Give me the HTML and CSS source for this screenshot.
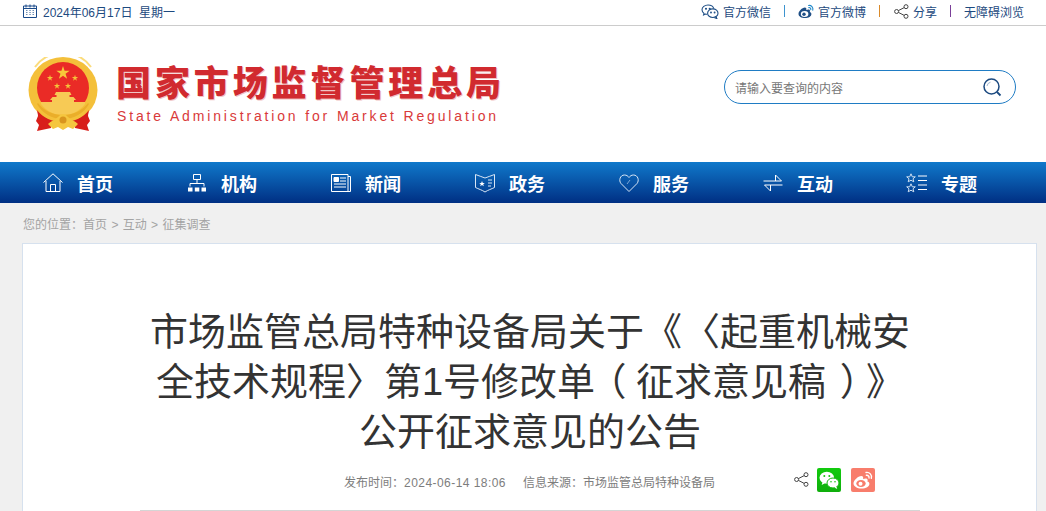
FILE: index.html
```html
<!DOCTYPE html>
<html lang="zh-CN">
	<head>
		<meta charset="utf-8">
		<title>市场监管总局特种设备局关于《〈起重机械安全技术规程〉第1号修改单（征求意见稿）》公开征求意见的公告</title>
		<link rel="stylesheet" href="styles.css">
	</head>
	<body>
		<!-- top bar -->
		<div class="topbar">
			<div class="date">
				<svg class="icon-cal" viewBox="0 0 14 14" width="14" height="14"><path d="M.5 2h13v11.500H.5zM.5 4.500h13" fill="none" stroke="#1a4a8a"/><path d="M3 .5v3M7 .5v3M11 .5v3" stroke="#1a4a8a"/><path d="M3 6.500h1.500M6.300 6.500h1.500M9.500 6.500h1.500M3 8.500h1.500M6.300 8.500h1.500M9.500 8.500h1.500M3 10.500h1.500M6.300 10.500h1.500M9.500 10.500h1.500" stroke="#5f82ad" stroke-width=".9"/></svg>
				<span>2024年06月17日&nbsp; 星期一</span>
			</div>
			<div class="toplinks">
				<a class="toplink" href="#">
					<svg viewBox="0 0 18 15" width="18" height="15" fill="none" stroke="#1f4f86" stroke-width="1.100"><path d="M7 1c-3.300 0-6 2.100-6 4.800 0 1.500.8 2.700 2 3.600l-.4 1.500 1.800-.9c.6.200 1.100.3 1.800.3"/><path d="M7 1c2.800 0 5.200 1.500 5.800 3.700"/><ellipse cx="11.800" cy="9.200" rx="5.200" ry="4.300"/><path d="M15 13l.8 1.500-2.300-.8"/><circle cx="5" cy="4.700" r=".5" fill="#1f4f86"/><circle cx="8.700" cy="4.700" r=".5" fill="#1f4f86"/><circle cx="10" cy="8.500" r=".4" fill="#1f4f86"/><circle cx="13.600" cy="8.500" r=".4" fill="#1f4f86"/></svg>
					<span>官方微信</span>
				</a>
				<i class="sep sep-blue"></i>
				<a class="toplink toplink-wb" href="#">
					<svg viewBox="0 0 17 15" width="17" height="15"><path d="M7 14C3.500 14 .5 12.300.5 9.900.5 7.400 4.300 3.600 6.800 3.600c1.600 0 1.800 1.300 1.400 2.500 2-.8 3.800-.7 3.800.9 0 .4-.1.700-.3 1 1 .3 1.700.9 1.700 1.900C13.400 12.300 10.600 14 7 14z" fill="#1f4f86"/><ellipse cx="6.600" cy="10" rx="3.800" ry="2.900" fill="#fff"/><circle cx="6" cy="10.200" r="1.700" fill="#1f4f86"/><path d="M10.500 1.500c2.800-.5 5 1.900 4.300 4.700M10.800 3.600c1.300-.2 2.300.9 2 2.100" fill="none" stroke="#1f88c9" stroke-width="1.100" stroke-linecap="round"/></svg>
					<span>官方微博</span>
				</a>
				<i class="sep sep-orange"></i>
				<a class="toplink" href="#">
					<svg viewBox="0 0 15 15" width="15" height="15" fill="none" stroke="#444" stroke-width="1"><circle cx="2.600" cy="7.500" r="2"/><circle cx="12" cy="2.700" r="2"/><circle cx="12" cy="12.300" r="2"/><path d="M4.400 6.600l5.800-3M4.400 8.400l5.800 3"/></svg>
					<span>分享</span>
				</a>
				<i class="sep sep-purple"></i>
				<a class="toplink" href="#"><span>无障碍浏览</span></a>
			</div>
		</div>

		<!-- logo and search -->
		<div class="header">
			<div class="logo">
				<svg class="emblem" viewBox="0 0 70 74" width="70" height="74">
					<defs>
						<polygon id="star" points="0,-1 .225,-.309 .951,-.309 .363,.118 .588,.809 0,.382 -.588,.809 -.363,.118 -.951,-.309 -.225,-.309"/>
					</defs>
					<!-- red ribbons sit behind the ring -->
					<path d="M9 50l14 12v9L9 74l2-6-3-4 2-5z" fill="#d81e1a"/>
					<path d="M61 50L47 62v9l14 3-2-6 3-4-2-5z" fill="#d81e1a"/>
					<ellipse cx="35" cy="33" rx="34.500" ry="33" fill="#f4c03a"/>
					<path d="M7 10a34 33 0 0 1 56 0" fill="none" stroke="#fbdc7c" stroke-width="2"/>
					<path d="M9 53c6 8 15 12 26 12s20-4 26-12l-2 8c-6 6-15 9-24 9s-18-3-24-9z" fill="#d81e1a"/>
					<circle cx="35" cy="31" r="26" fill="#ea2b26"/>
					<use href="#star" transform="translate(35 16) scale(7)" fill="#f7c83a"/>
					<use href="#star" transform="translate(22 21) scale(3.300)" fill="#f5c23a"/>
					<use href="#star" transform="translate(47 21) scale(3.300)" fill="#f5c23a"/>
					<use href="#star" transform="translate(29 29) scale(3.300)" fill="#f5c23a"/>
					<use href="#star" transform="translate(40 29) scale(3.300)" fill="#f5c23a"/>
					<path d="M28 35h14l1.500 3h-2v2h4l2.500 3h-2v4H24v-4h-2l2.500-3h4v-2h-2z" fill="#f7ca55"/>
					<path d="M13 47c6 8 14 11 22 11s16-3 22-11v-2H13z" fill="#f7ca55"/>
					<path d="M9 47c5 9 15 15 26 15s21-6 26-15l-1-1c-6 8-15 12-25 12s-19-4-25-12z" fill="#eaae2a"/>
					<path d="M20 67c3-3 7-4 10-7 2-2 3-3 5-3s3 1 5 3c3 3 7 4 10 7l-5 5-5-2-5 3-5-3-5 2z" fill="#f5c63f"/>
					<circle cx="35" cy="63" r="3.500" fill="#d9951e"/>
				</svg>
				<div class="logotext">
					<div class="cn">国家市场监督管理总局</div>
					<div class="en">State Administration for Market Regulation</div>
				</div>
			</div>
			<div class="search">
				<span>请输入要查询的内容</span>
				<svg viewBox="0 0 20 20" width="20" height="20" fill="none"><circle cx="9.500" cy="9.500" r="7.500" stroke="#1c4a80" stroke-width="1.500"/><path d="M15 15l3.500 3.500" stroke="#1c4a80" stroke-width="1.800"/><path d="M5 9a4.500 4.500 0 0 1 3.500-3.800" stroke="#9fb6d0" stroke-width="1"/></svg>
			</div>
		</div>

		<!-- main nav -->
		<div class="nav">
			<a href="#">
				<svg viewBox="0 0 20 20" width="20" height="20" fill="none" stroke="#fff"><path d="M.5 9.500L10 .8l9.500 8.700M3 8v10.500h14V8M7.500 18.500v-7h5v7"/></svg>
				<span>首页</span>
			</a>
			<a href="#">
				<svg viewBox="0 0 20 20" width="20" height="20" fill="none" stroke="#fff"><path d="M6.500 1.500h7v5h-7zM10 6.500v4M3 13.500v-3h14v3"/><path d="M1 14.500h4.500v4H1zM7.800 14.500h4.500v4H7.800zM14.500 14.500H19v4h-4.500z" fill="#fff" stroke="none"/></svg>
				<span>机构</span>
			</a>
			<a href="#">
				<svg viewBox="0 0 20 20" width="20" height="20" fill="none" stroke="#fff"><path d="M.5 1.500h16.500v17H.5zM17 3.500h2.500v15H17"/><path d="M3 4.500h4.500v4H3z" fill="#fff"/><path d="M9 5h6M9 8h6M3 11h12M3 14h12"/></svg>
				<span>新闻</span>
			</a>
			<a href="#">
				<svg viewBox="0 0 20 20" width="20" height="20" fill="none" stroke="#d9e6f5"><path d="M.5 1.500c3 1.500 6.500 2 9.500 3.500 3-1.500 6.500-2 9.500-3.500v13c-3 1.500-6.500 2.500-9.500 4.500-3-2-6.500-3-9.500-4.500z"/><path d="M13 7h4M13 10h4M13 13h3"/><path d="M7 8l.8 2h2l-1.600 1.300.6 2L7 12.100l-1.800 1.200.6-2L4.200 10h2z" fill="#fff" stroke="none"/></svg>
				<span>政务</span>
			</a>
			<a href="#">
				<svg viewBox="0 0 20 20" width="20" height="20" fill="none" stroke="#d9e6f5"><path d="M10 18.500L2 10.500C-.5 7.500 1 2 5.500 2 7.500 2 9 3 10 4.500 11 3 12.500 2 14.500 2 19 2 20.500 7.500 18 10.500z"/><path d="M8 11l3-4" stroke="#7fa8d6"/></svg>
				<span>服务</span>
			</a>
			<a href="#">
				<svg viewBox="0 0 20 20" width="20" height="20" fill="none" stroke="#fff"><path d="M.5 8h18L12.500 2v6M19.500 12H1.500l6 6v-6"/></svg>
				<span>互动</span>
			</a>
			<a class="nav-last" href="#">
				<svg viewBox="0 0 22 20" width="22" height="20" fill="none" stroke="#cfe0f2"><path d="M5 .8l1.300 3h3L7 5.800l.8 3L5 7.200 2.200 8.800l.8-3L.7 3.800h3zM5 10.800l1.300 3h3L7 15.800l.8 3L5 17.200l-2.800 1.600.8-3-2.300-2h3z"/><path d="M12 3h9M12 7.500h9M12 12h9M12 16.500h9" stroke="#fff"/></svg>
				<span>专题</span>
			</a>
		</div>

		<!-- breadcrumb and article -->
		<div class="page">
			<div class="crumb">您的位置<span class="punc">：</span>首页 <em>&gt;</em> 互动 <em>&gt;</em> 征集调查</div>
			<div class="card">
				<h1>市场监管总局特种设备局关于《〈起重机械安<br>全技术规程〉第1号修改单<span class="paren-l">（</span>征求意见稿<span class="paren-r">）</span>》<br>公开征求意见的公告</h1>
				<div class="meta">
					<span class="time">发布时间<span class="punc">：</span><span class="num">2024-06-14 18:06</span></span>
					<span class="source">信息来源<span class="punc">：</span>市场监管总局特种设备局</span>
					<div class="shares">
						<svg viewBox="0 0 15 15" width="15" height="15" fill="none" stroke="#444" stroke-width="1"><circle cx="2.600" cy="7.500" r="2"/><circle cx="12" cy="2.700" r="2"/><circle cx="12" cy="12.300" r="2"/><path d="M4.400 6.600l5.800-3M4.400 8.400l5.800 3"/></svg>
						<span class="badge badge-wx">
							<svg viewBox="0 0 24 24" width="24" height="24"><ellipse cx="9.800" cy="9.800" rx="7.300" ry="6" fill="#fff"/><path d="M5.500 14l-.8 3 3.200-1.800z" fill="#fff"/><ellipse cx="16" cy="15" rx="6" ry="5" fill="#fff" stroke="#13b80d" stroke-width="1"/><path d="M19.500 18.500l.7 2.500-2.800-1.500z" fill="#fff"/><circle cx="7.300" cy="8" r="1" fill="#16c20e"/><circle cx="12.300" cy="8" r="1" fill="#16c20e"/><circle cx="14" cy="13.800" r=".8" fill="#16c20e"/><circle cx="18" cy="13.800" r=".8" fill="#16c20e"/></svg>
						</span>
						<span class="badge badge-wb">
							<svg viewBox="0 0 24 24" width="24" height="24"><path d="M10.500 20.500c-4.500 0-8-2.100-8-5 0-3 4.500-7.500 7.800-7.500 1.900 0 2.200 1.600 1.700 3 2.500-1 4.700-.8 4.700 1.100 0 .5-.1.900-.4 1.300 1.300.4 2.100 1.100 2.100 2.300 0 2.700-3.400 4.800-7.900 4.800z" fill="#fff"/><ellipse cx="10" cy="15.500" rx="4.700" ry="3.500" fill="#f87d6c"/><circle cx="9.500" cy="15.700" r="2" fill="#fff"/><path d="M15 4.500c3.500-.6 6.300 2.300 5.300 5.800M15.400 7.300c1.700-.3 3 1.100 2.600 2.700" fill="none" stroke="#fff" stroke-width="1.400" stroke-linecap="round"/></svg>
						</span>
					</div>
				</div>
				<div class="rule"></div>
			</div>
		</div>
	</body>
</html>
```

FILE: styles.css
```css
*{
	box-sizing: border-box;
}
html, body{
	margin: 0;
	padding: 0;
}
body{
	width: 1046px;
	height: 511px;
	overflow: hidden;
	font-family: "Liberation Sans", "Noto Sans CJK SC", sans-serif;
	font-size: 12px;
	text-spacing-trim: space-all;
	background-color: #ffffff;
}
a{
	text-decoration: none;
	color: inherit;
}
/* centred full-width punctuation */
.punc{
	font-family: "Liberation Sans", "Noto Sans CJK TC", sans-serif;
}

/* top bar */
.topbar{
	height: 26px;
	display: flex;
	justify-content: space-between;
	align-items: center;
	padding: 0 22px 3px 23px;
	border-bottom: 1px solid #cccccc;
	color: #1d4a80;
}
.date{
	display: flex;
	align-items: center;
	gap: 6px;
}
.toplinks{
	display: flex;
	align-items: center;
}
.toplink{
	display: flex;
	align-items: center;
	gap: 4px;
}
.toplink-wb{
	gap: 3px;
}
.sep{
	width: 1px;
	height: 12px;
	margin: 0 13px;
}
.sep-blue{
	background-color: #3d93cf;
}
.sep-orange{
	background-color: #d98a2b;
	margin-right: 14px;
}
.sep-purple{
	background-color: #7a3f98;
}

/* logo and search */
.header{
	height: 136px;
	display: flex;
	justify-content: space-between;
	align-items: center;
	padding: 0 30px 0 28px;
}
.logo{
	display: flex;
	align-items: center;
	gap: 18px;
}
.emblem{
	display: block;
}
.logotext{
	width: 385px;
}
.cn{
	font-size: 35px;
	line-height: 40px;
	font-weight: 900;
	letter-spacing: 3.900px;
	white-space: nowrap;
	color: #d12a2f;
	text-shadow: 1px 1px 0 #f0c4c4;
}
.en{
	margin-top: 4px;
	padding-left: 1px;
	font-size: 14px;
	line-height: 16px;
	letter-spacing: 2.850px;
	white-space: nowrap;
	color: #d93a3a;
}
.search{
	width: 292px;
	height: 34px;
	margin-bottom: 14px;
	display: flex;
	justify-content: space-between;
	align-items: center;
	padding: 0 13px 0 10px;
	border: 1px solid #1f7cc4;
	border-radius: 17px;
	color: #777777;
}

/* main nav */
.nav{
	height: 41px;
	display: flex;
	padding-left: 43px;
	background: linear-gradient(to bottom, #1079cb, #002f83);
}
.nav a{
	flex: none;
	width: 144px;
	display: flex;
	align-items: center;
	gap: 14px;
	color: #ffffff;
	font-size: 18px;
	font-weight: bold;
}
.nav svg{
	flex: none;
}
.nav a.nav-last{
	margin-left: -1px;
	gap: 13px;
}

/* breadcrumb and article */
.page{
	height: 308px;
	padding: 0 9px 0 22px;
	background-color: #f0f0f0;
}
.crumb{
	height: 40px;
	padding: 14px 0 0 1px;
	line-height: 16px;
	color: #a3a3a3;
}
.crumb em{
	font-style: normal;
	margin: 0 1px;
}
.card{
	height: 268px;
	padding: 63px 116px 0 117px;
	background-color: #ffffff;
	border: 1px solid #d6e1ee;
	border-bottom: none;
}
h1{
	margin: 0;
	height: 150px;
	font-size: 38px;
	line-height: 50px;
	font-weight: normal;
	text-align: center;
	white-space: nowrap;
	color: #333333;
}
/* the brackets sit in the middle of their cell, not against the text */
.paren-l, .paren-r{
	font-feature-settings: "palt";
}
.paren-l{
	margin: 0 11px;
}
.paren-r{
	margin: 0 6px 0 15px;
}
.meta{
	height: 53px;
	display: flex;
	align-items: center;
	padding: 0 45px 4px 204px;
	color: #7d7d7d;
}
.num{
	letter-spacing: .45px;
}
.source{
	margin-left: 17px;
}
.shares{
	margin-left: auto;
	margin-bottom: 4px;
	display: flex;
	align-items: center;
	gap: 8px;
}
.badge{
	width: 24px;
	height: 24px;
	display: block;
	border-radius: 2px;
}
.badge svg{
	display: block;
}
.badge-wx{
	background: linear-gradient(to bottom, #12cb0e, #0fae0c);
}
.badge-wb{
	margin-left: 2px;
	background-color: #f87d6c;
}
.rule{
	height: 1px;
	background-color: #d5d5d5;
}
```
